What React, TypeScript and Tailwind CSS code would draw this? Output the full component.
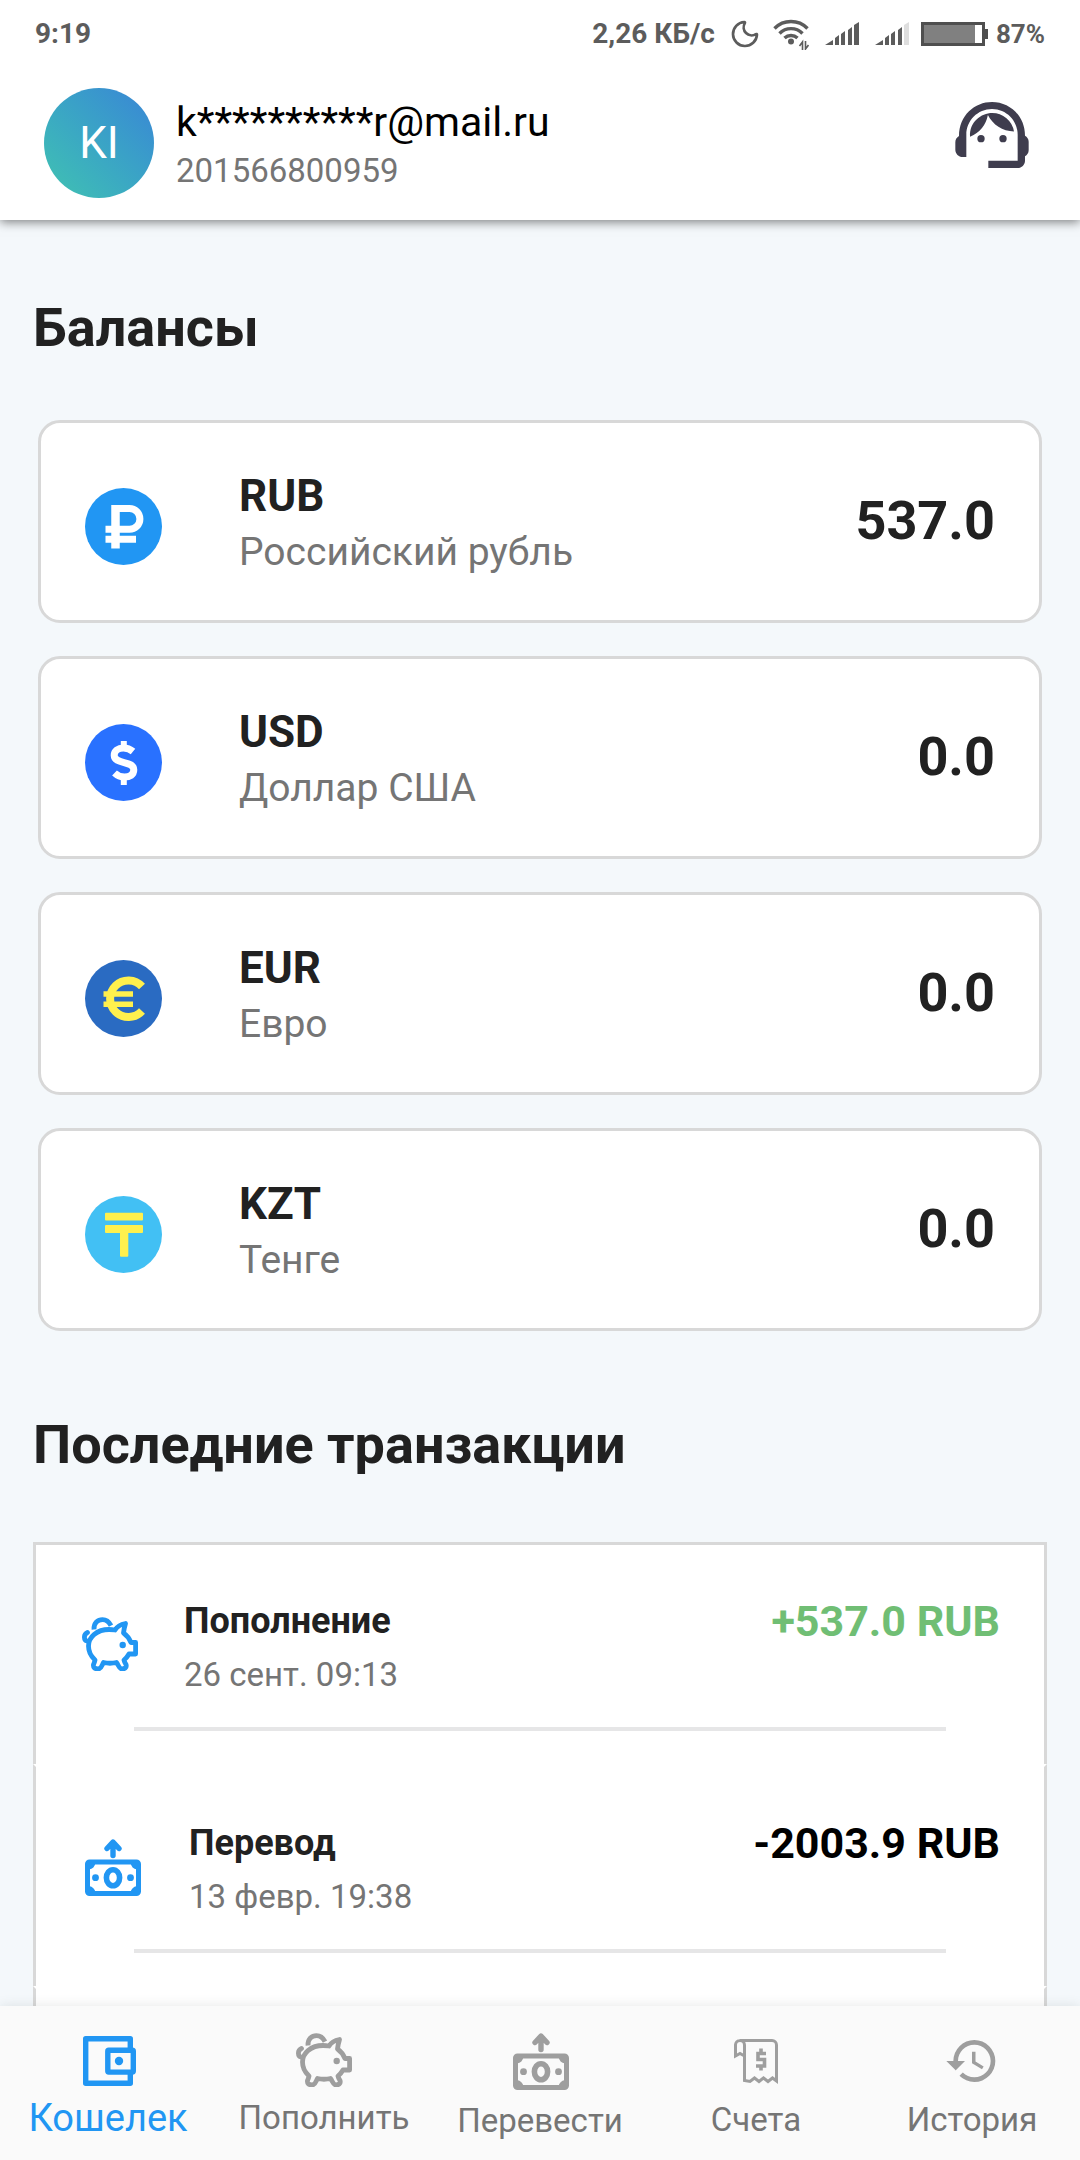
import React from 'react';
import { Moon } from 'lucide-react';
import { MdHistory, MdSupportAgent } from 'react-icons/md';

const StatusBar: React.FC = () => (
  <div className="flex items-center h-[67px] px-[35px] text-[28px] leading-8 font-bold text-[#5c5c5c]">
    <span className="flex-1">9:19</span>
    <span className="mr-3.5">2,26 КБ/с</span>
    <Moon className="w-8 h-8 mr-3" strokeWidth={2} />
    <svg className="w-9 h-8 mr-4" viewBox="0 0 36 32" fill="none" stroke="currentColor" strokeWidth="3.4">
      <path d="M1.5 10.5a23 23 0 0 1 33 0" />
      <path d="M6.5 15.5a16 16 0 0 1 23 0" />
      <path d="M11.5 20a9.5 9.5 0 0 1 13 0" />
      <circle cx="18" cy="23.5" r="3" fill="currentColor" stroke="none" />
      <path strokeWidth="1.6" d="M29.5 32v-8l-3 4M32.5 23v8l3-4" />
    </svg>
    <svg className="w-[34px] h-6 mr-4" viewBox="0 0 34 24" fill="currentColor">
      <path d="M0 23L8 18v5zM10 16l4-3v10h-4zM16 12l4-3v14h-4zM23 8l4-3v18h-4zM29 3l5-3v23h-5z" />
    </svg>
    <svg className="w-[34px] h-6 mr-3" viewBox="0 0 34 24" fill="currentColor">
      <path d="M0 23L8 18v5zM10 16l4-3v10h-4zM16 12l4-3v14h-4zM23 8l4-3v18h-4z" />
      <path fill="#dedede" d="M29 3l5-3v23h-5z" />
    </svg>
    <svg className="w-[67px] h-6 mr-2" viewBox="0 0 67 24">
      <rect x="1.5" y="1.5" width="61" height="21" fill="#fff" stroke="#4f4f4f" strokeWidth="3" />
      <rect x="3" y="3" width="51" height="18" fill="#808080" />
      <path d="M64 7h3v10h-3z" fill="#4f4f4f" />
    </svg>
    <span className="text-[26px]">87%</span>
  </div>
);

const RubleIcon = () => (
  <svg className="w-[77px] h-[77px]" viewBox="0 0 77 77" fill="none" stroke="#fff" strokeWidth="7">
    <circle cx="38.5" cy="38.5" r="38.5" fill="#2196f3" stroke="none" />
    <path strokeWidth="8.5" d="M30.5 60.5V17" />
    <path d="M28 20.5h16.5a10.4 10.4 0 0 1 0 20.8H20.5M20.5 51.2h30.5" />
  </svg>
);

const DollarIcon = () => (
  <svg className="w-[77px] h-[77px]" viewBox="0 0 77 77" fill="none" stroke="#fff" strokeWidth="7">
    <circle cx="38.5" cy="38.5" r="38.5" fill="#2971ff" stroke="none" />
    <path strokeWidth="6" d="M38.8 17v8M38.8 53v8" />
    <path d="M48 27.5c-3-2.5-6-3.5-9.5-3.5-5.5 0-9.3 3-9.3 7.3 0 9.7 19.6 5 19.6 14.5 0 5-4 7.2-9.3 7.2-4 0-7-1.2-10-4" />
  </svg>
);

const EuroIcon = () => (
  <svg className="w-[77px] h-[77px]" viewBox="0 0 77 77" fill="none" stroke="#fff04d" strokeWidth="5.4">
    <circle cx="38.5" cy="38.5" r="38.5" fill="#2a6bc2" stroke="none" />
    <path strokeWidth="8" d="M57 26.5a18.3 18.3 0 1 0 0 24.5" />
    <path d="M18.5 34H48M18.5 44.3H48" />
  </svg>
);

const TengeIcon = () => (
  <svg className="w-[77px] h-[77px]" viewBox="0 0 77 77" fill="#fff04d">
    <circle cx="38.5" cy="38.5" r="38.5" fill="#42c0f4" />
    <rect x="20" y="16.7" width="38" height="7.8" rx="1" />
    <rect x="20" y="29" width="38" height="8" rx="1" />
    <rect x="35" y="33" width="8.3" height="27.7" rx="1" />
  </svg>
);

const PiggyIcon = () => (
  <svg className="w-14 h-[54px]" viewBox="0 0 56 54" fill="none" stroke="currentColor" strokeWidth="4.8" strokeLinecap="round" strokeLinejoin="round">
    <path d="M6.5 29C6.5 20 15 12.5 27 12.5q3 0 6 .5 3-5 10.5-6.5-1.5 5-2 9.5 5 3.5 7.5 9.5h4.6v11.5H47q-2 3.5-5 6 .5 2.5 2 4.5c1 3-1.5 4.5-4 4.5-3 0-3.5-4-5.5-6.5q-6.5 1.5-13 0c-1.5 2.5-2 6.5-5.5 6.5-3 0-5-1.5-4.5-4.5q1-2 1.5-4.5-6.5-6-6.5-14z" />
    <path strokeLinecap="butt" d="M12 12.5C11.5 5.5 16 2.6 20.5 2.6q5.5 0 8.500 6" />
    <path d="M5.5 15.5c-4.5 2-3.500 8-.5 8.5" />
    <circle cx="40.7" cy="28" r="3.2" fill="currentColor" stroke="none" />
  </svg>
);

const TransferIcon = () => (
  <svg className="w-[61px] h-[57px]" viewBox="-3 0 61 57" fill="none" stroke="currentColor" strokeWidth="5">
    <path strokeLinecap="round" strokeLinejoin="round" strokeWidth="5.4" d="M28 16.5V3.500M22 9.5l6-6.500 6 6.500" />
    <rect x="2.5" y="23" width="51" height="31.5" rx="2" />
    <path fill="currentColor" stroke="none" d="M4 24h6.5q-1 5.500-6.500 6.500zM52 24h-6.500q1 5.500 6.500 6.500zM4 53.500h6.500q-1-5.500-6.500-6.500zM52 53.500h-6.500q1-5.500 6.500-6.500z" />
    <ellipse cx="28" cy="38.7" rx="6.6" ry="8" strokeWidth="5.6" />
    <circle cx="10.5" cy="38.7" r="3.4" fill="currentColor" stroke="none" />
    <circle cx="45.5" cy="38.7" r="3.4" fill="currentColor" stroke="none" />
  </svg>
);

const WalletIcon = () => (
  <svg className="w-[60px] h-14" viewBox="-5 -3 60 56" fill="none" stroke="currentColor" strokeWidth="5.4" strokeLinejoin="round">
    <path d="M47.3 13V2.7H2.7v44.6h44.6V37" />
    <rect x="24.8" y="14.3" width="25.5" height="21.8" rx="1" />
    <circle cx="36" cy="25" r="4.2" fill="currentColor" stroke="none" />
  </svg>
);

const BillIcon = () => (
  <svg className="w-14 h-14" viewBox="-6 -6 56 56" fill="none" stroke="currentColor" strokeWidth="3">
    <path d="M5.5 1.5H38a4.5 4.5 0 0 1 4.5 4.5v36l-4-3-4.5 3.5-4.5-3.5-4.5 3.5-4.5-3.5-4.5 3.5-5.5-1V6a4.5 4.5 0 0 0-9 0v11l4.5-2.5 4.5 2.5" />
    <path strokeWidth="3.6" d="M32 14.5h-8v6h6.5V27H22M27 9.5V15M27 26.5v5" />
  </svg>
);

const balances = [
  { code: 'RUB', name: 'Российский рубль', amount: '537.0', icon: <RubleIcon /> },
  { code: 'USD', name: 'Доллар США', amount: '0.0', icon: <DollarIcon /> },
  { code: 'EUR', name: 'Евро', amount: '0.0', icon: <EuroIcon /> },
  { code: 'KZT', name: 'Тенге', amount: '0.0', icon: <TengeIcon /> },
];

const transactions = [
  { title: 'Пополнение', date: '26 сент. 09:13', amount: '+537.0 RUB', income: true, icon: <PiggyIcon /> },
  { title: 'Перевод', date: '13 февр. 19:38', amount: '-2003.9 RUB', income: false, icon: <TransferIcon /> },
];

const tabs = [
  { label: 'Кошелек', icon: <WalletIcon />, active: true },
  { label: 'Пополнить', icon: <PiggyIcon /> },
  { label: 'Перевести', icon: <TransferIcon /> },
  { label: 'Счета', icon: <BillIcon /> },
  { label: 'История', icon: <MdHistory className="w-14 h-14" /> },
];

const App: React.FC = () => {
  return (
    <div className="flex flex-col h-screen overflow-hidden bg-[#f4f8fb] text-[#212121] font-['Roboto',sans-serif]">
      <header className="relative shrink-0 bg-white shadow-[0_2px_10px_rgba(0,0,0,0.5)]">
        <StatusBar />
        <div className="flex items-center pt-[21px] pb-[22px] px-11">
          <div className="flex items-center justify-center w-[110px] h-[110px] mr-[22px] rounded-full bg-linear-to-tr from-[#41c3b0] to-[#3a84d6] text-white text-[44px]">
            KI
          </div>
          <div className="flex-1 pt-1">
            <p className="text-[41px] leading-[52px] text-black">k**********r@mail.ru</p>
            <p className="text-[33px] leading-[46px] text-[#757575]">201566800959</p>
          </div>
          <button type="button" aria-label="Поддержка" className="pb-4 text-[#3f3d4e]">
            <MdSupportAgent className="w-[88px] h-[88px]" />
          </button>
        </div>
      </header>

      <main className="flex flex-col flex-1 min-h-0 overflow-hidden px-[33px]">
        <h1 className="mt-[76px] text-[54px] leading-[64px] font-bold">Балансы</h1>
        <div className="flex flex-col gap-[33px] mt-[60px] px-[5px]">
          {balances.map((b) => (
            <div
              key={b.code}
              className="flex items-center h-[203px] shrink-0 px-11 bg-white border-[3px] border-[#d8d8d8] rounded-[22px]"
            >
              <div className="pt-2.5">{b.icon}</div>
              <div className="flex-1 pl-[77px] pt-1">
                <h2 className="text-[44px] leading-[56px] font-bold">{b.code}</h2>
                <p className="text-[39px] leading-[56px] text-[#757575]">{b.name}</p>
              </div>
              <span className="pb-0.5 text-[54px] leading-[64px] font-bold">{b.amount}</span>
            </div>
          ))}
        </div>

        <h1 className="mt-[82px] text-[54px] leading-[64px] font-bold">Последние транзакции</h1>
        <ul className="flex flex-col flex-1 mt-[65px] bg-white">
          {transactions.map((t) => (
            <li
              key={t.title}
              className="flex flex-col shrink-0 h-[222px] border-x-[3px] border-t-[3px] border-x-[#d8d8d8] border-t-transparent first:border-t-[#d8d8d8]"
            >
              <div className="flex flex-1 items-start pl-[46px] pr-11">
                <div className="pt-[72px] text-[#2196f3]">{t.icon}</div>
                <div className="flex-1 pl-[46px] pt-[49px]">
                  <h3 className="text-[36px] leading-[54px] font-bold">{t.title}</h3>
                  <p className="text-[33px] leading-[54px] text-[#757575]">{t.date}</p>
                </div>
                <span className={`pt-[51px] text-[43px] leading-[50px] font-bold ${t.income ? 'text-[#70be74]' : 'text-black'}`}>
                  {t.amount}
                </span>
              </div>
              <div className="h-1 mx-[98px] mb-[33px] bg-[#e6e6e7]" />
            </li>
          ))}
          {/* edge of the next row, cut off by the tab bar */}
          <li className="flex-1 border-x-[3px] border-t-[3px] border-x-[#d8d8d8] border-t-transparent" aria-hidden="true" />
        </ul>
      </main>

      <nav className="relative grid grid-cols-5 shrink-0 h-[154px] bg-[#fafafa] shadow-[0_0_12px_rgba(0,0,0,0.1)]">
        {tabs.map((tab) => (
          <button
            key={tab.label}
            type="button"
            className={`flex flex-col items-center pt-[27px] ${tab.active ? 'text-[#2196f3]' : 'text-[#9e9e9e]'}`}
          >
            {tab.icon}
            <span className={`leading-[46px] ${tab.active ? 'mt-1.5 text-[38px]' : 'mt-2 text-[33px] text-[#757575]'}`}>
              {tab.label}
            </span>
          </button>
        ))}
      </nav>
    </div>
  );
};

export default App;
